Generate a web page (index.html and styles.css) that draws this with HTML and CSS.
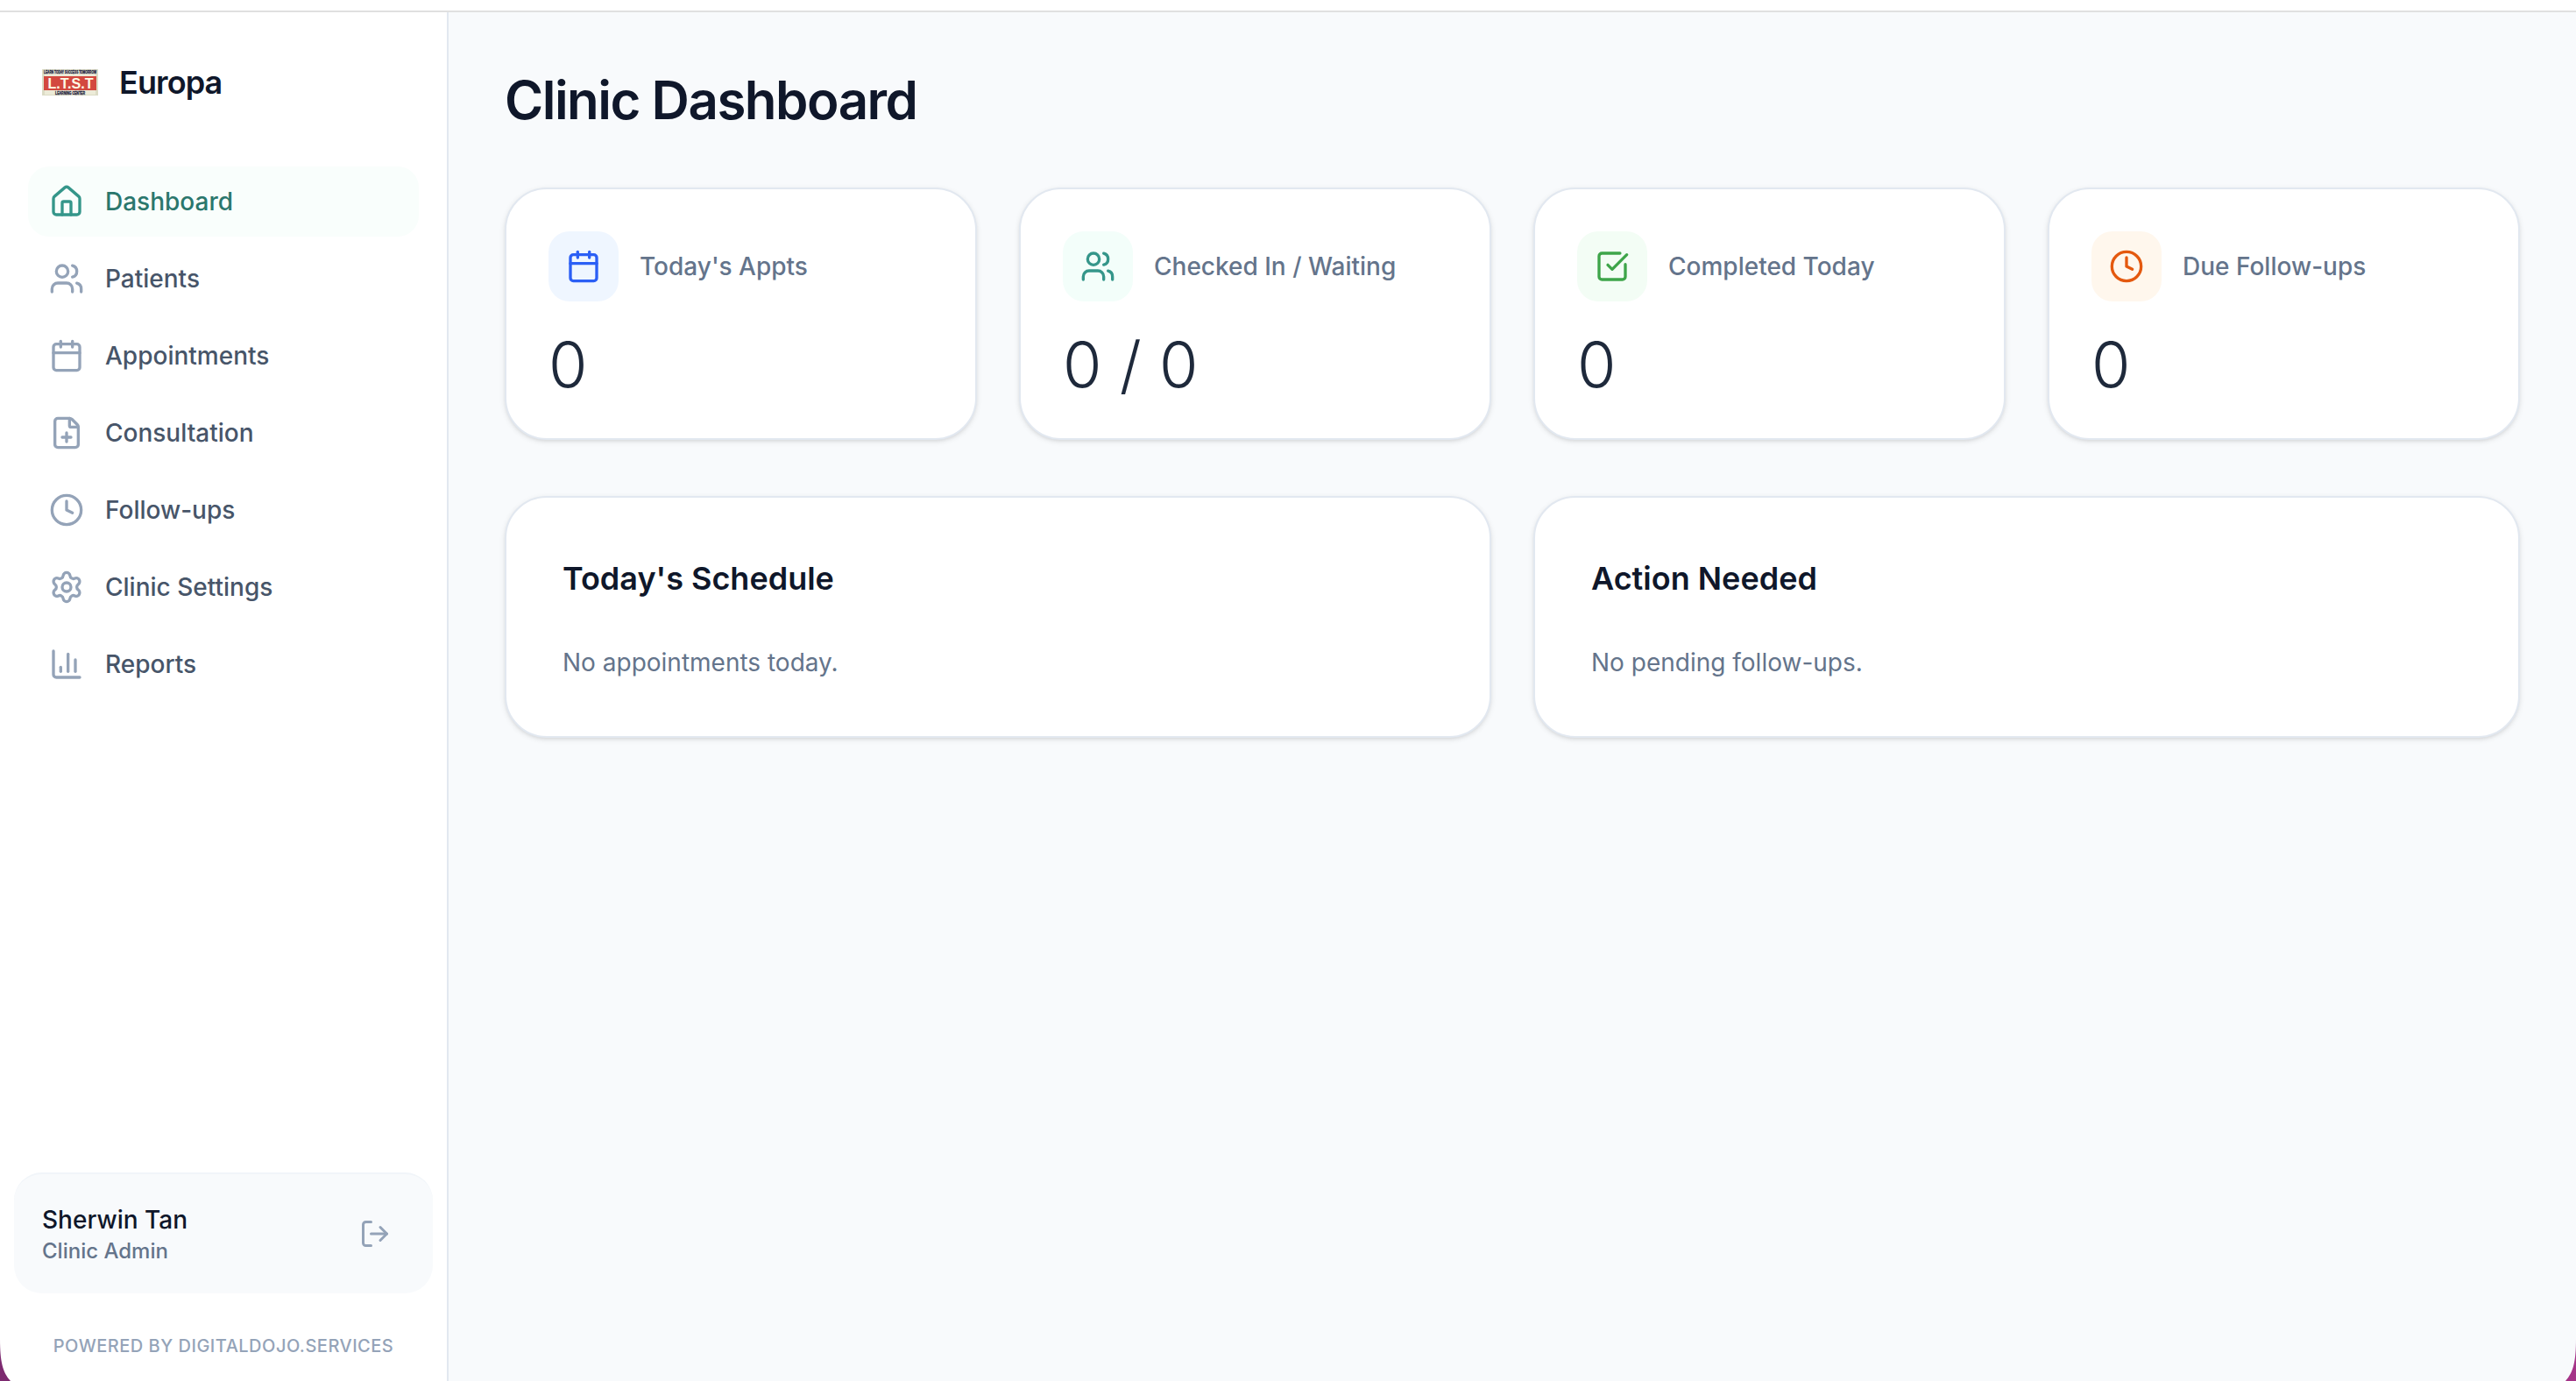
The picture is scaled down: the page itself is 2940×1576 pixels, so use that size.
FILE: index.html
```html
<!DOCTYPE html>
<html lang="en">
<head>
    <meta charset="UTF-8">
    <meta name="viewport" content="width=device-width, initial-scale=1.0">
    <title>Clinic Dashboard</title>
    <link rel="stylesheet" href="styles.css">
</head>
<body>
    <div class="top-strip"></div>
    <div class="app">
        <aside class="sidebar">
            <div class="brand">
                <svg class="brand-logo" viewBox="0 0 64 30">
                    <rect width="64" height="30" fill="#dcdcc6"/>
                    <rect x="3" y="1" width="58" height="28" fill="#ecebd8"/>
                    <rect x="2" y="8" width="60" height="16" fill="#d3483f"/>
                    <text class="logo-small" x="2" y="5.4" textLength="60" lengthAdjust="spacingAndGlyphs">LEARN TODAY SUCCESS TOMORROW</text>
                    <text class="logo-big" x="6.5" y="21.8" textLength="52" lengthAdjust="spacingAndGlyphs">L.T.S.T</text>
                    <text class="logo-small" x="15" y="28.6" textLength="34" lengthAdjust="spacingAndGlyphs">LEARNING CENTER</text>
                </svg>
                <span class="brand-name">Europa</span>
            </div>
            <nav class="nav">
                <a class="nav-item active">
                    <svg class="icon" viewBox="0 0 24 24"><path d="M15 21v-8a1 1 0 0 0-1-1h-4a1 1 0 0 0-1 1v8"/><path d="M3 10a2 2 0 0 1 .709-1.528l7-5.999a2 2 0 0 1 2.582 0l7 5.999A2 2 0 0 1 21 10v9a2 2 0 0 1-2 2H5a2 2 0 0 1-2-2z"/></svg>
                    Dashboard
                </a>
                <a class="nav-item">
                    <svg class="icon" viewBox="0 0 24 24"><path d="M16 21v-2a4 4 0 0 0-4-4H6a4 4 0 0 0-4 4v2"/><path d="M16 3.128a4 4 0 0 1 0 7.744"/><path d="M22 21v-2a4 4 0 0 0-3-3.87"/><circle cx="9" cy="7" r="4"/></svg>
                    Patients
                </a>
                <a class="nav-item">
                    <svg class="icon" viewBox="0 0 24 24"><path d="M8 2v4"/><path d="M16 2v4"/><rect width="18" height="18" x="3" y="4" rx="2"/><path d="M3 10h18"/></svg>
                    Appointments
                </a>
                <a class="nav-item">
                    <svg class="icon" viewBox="0 0 24 24"><path d="M6 22a2 2 0 0 1-2-2V4a2 2 0 0 1 2-2h8a2.4 2.4 0 0 1 1.704.706l3.588 3.588A2.4 2.4 0 0 1 20 8v12a2 2 0 0 1-2 2z"/><path d="M14 2v5a1 1 0 0 0 1 1h5"/><path d="M9 15h6"/><path d="M12 18v-6"/></svg>
                    Consultation
                </a>
                <a class="nav-item">
                    <svg class="icon" viewBox="0 0 24 24"><path d="M12 6v6l4 2"/><circle cx="12" cy="12" r="10"/></svg>
                    Follow-ups
                </a>
                <a class="nav-item">
                    <svg class="icon" viewBox="0 0 24 24"><path d="M9.671 4.136a2.34 2.34 0 0 1 4.659 0 2.34 2.34 0 0 0 3.319 1.915 2.34 2.34 0 0 1 2.33 4.033 2.34 2.34 0 0 0 0 3.831 2.34 2.34 0 0 1-2.33 4.033 2.34 2.34 0 0 0-3.319 1.915 2.34 2.34 0 0 1-4.659 0 2.34 2.34 0 0 0-3.32-1.915 2.34 2.34 0 0 1-2.33-4.033 2.34 2.34 0 0 0 0-3.831A2.34 2.34 0 0 1 6.35 6.051a2.34 2.34 0 0 0 3.319-1.915"/><circle cx="12" cy="12" r="3"/></svg>
                    Clinic Settings
                </a>
                <a class="nav-item">
                    <svg class="icon" viewBox="0 0 24 24"><path d="M3 3v16a2 2 0 0 0 2 2h16"/><path d="M18 17V9"/><path d="M13 17V5"/><path d="M8 17v-3"/></svg>
                    Reports
                </a>
            </nav>
            <div class="user">
                <div>
                    <div class="user-name">Sherwin Tan</div>
                    <div class="user-role">Clinic Admin</div>
                </div>
                <button class="logout" aria-label="Log out">
                    <svg class="icon icon-sm" viewBox="0 0 24 24"><path d="m16 17 5-5-5-5"/><path d="M21 12H9"/><path d="M9 21H5a2 2 0 0 1-2-2V5a2 2 0 0 1 2-2h4"/></svg>
                </button>
            </div>
            <p class="powered">Powered by digitaldojo.services</p>
        </aside>

        <main class="main">
            <h1>Clinic Dashboard</h1>
            <section class="stats">
                <div class="card stat">
                    <div class="stat-head">
                        <span class="stat-icon blue">
                            <svg class="icon" viewBox="0 0 24 24"><path d="M8 2v4"/><path d="M16 2v4"/><rect width="18" height="18" x="3" y="4" rx="2"/><path d="M3 10h18"/></svg>
                        </span>
                        <span>Today's Appts</span>
                    </div>
                    <div class="stat-value">0</div>
                </div>
                <div class="card stat">
                    <div class="stat-head">
                        <span class="stat-icon teal">
                            <svg class="icon" viewBox="0 0 24 24"><path d="M16 21v-2a4 4 0 0 0-4-4H6a4 4 0 0 0-4 4v2"/><path d="M16 3.128a4 4 0 0 1 0 7.744"/><path d="M22 21v-2a4 4 0 0 0-3-3.87"/><circle cx="9" cy="7" r="4"/></svg>
                        </span>
                        <span>Checked In / Waiting</span>
                    </div>
                    <div class="stat-value">0 / 0</div>
                </div>
                <div class="card stat">
                    <div class="stat-head">
                        <span class="stat-icon green">
                            <svg class="icon" viewBox="0 0 24 24"><path d="M21 10.656V19a2 2 0 0 1-2 2H5a2 2 0 0 1-2-2V5a2 2 0 0 1 2-2h12.344"/><path d="m9 11 3 3L22 4"/></svg>
                        </span>
                        <span>Completed Today</span>
                    </div>
                    <div class="stat-value">0</div>
                </div>
                <div class="card stat">
                    <div class="stat-head">
                        <span class="stat-icon orange">
                            <svg class="icon" viewBox="0 0 24 24"><path d="M12 6v6l4 2"/><circle cx="12" cy="12" r="10"/></svg>
                        </span>
                        <span>Due Follow-ups</span>
                    </div>
                    <div class="stat-value">0</div>
                </div>
            </section>
            <section class="panels">
                <div class="card panel">
                    <h2>Today's Schedule</h2>
                    <p>No appointments today.</p>
                </div>
                <div class="card panel">
                    <h2>Action Needed</h2>
                    <p>No pending follow-ups.</p>
                </div>
            </section>
        </main>
    </div>

    <!-- Rounded window corners -->
    <svg class="corner corner-left" viewBox="0 0 20 60"><path d="M0 12C0 38 3 50 12 60H0Z"/></svg>
    <svg class="corner corner-right" viewBox="0 0 20 60"><path d="M20 12C20 38 17 50 8 60H20Z"/></svg>
</body>
</html>
```

FILE: styles.css
```css
* {
    box-sizing: border-box;
}

body {
    display: flex;
    flex-direction: column;
    height: 100vh;
    margin: 0;
    background: #f8fafc;
    color: #0f172a;
    font-family: Inter, "Liberation Sans", sans-serif;
    font-size: 28px;
    line-height: 40px;
    overflow: hidden;
}

h1, h2, p {
    margin: 0;
}

.top-strip {
    flex: none;
    height: 14px;
    background: #fff;
    border-bottom: 2px solid #e0e0e0;
}

.app {
    display: flex;
    flex: 1;
    min-height: 0;
}

/* Sidebar */
.sidebar {
    display: flex;
    flex-direction: column;
    flex: none;
    width: 512px;
    background: #fff;
    border-right: 2px solid #e2e8f0;
}

.brand {
    display: flex;
    align-items: center;
    gap: 24px;
    height: 160px;
    padding: 0 48px;
}

.brand-logo {
    width: 64px;
    height: 30px;
    overflow: visible;
}

.logo-small {
    font-family: "Liberation Sans", sans-serif;
    font-size: 5px;
    font-weight: 700;
    fill: #20203c;
    stroke: #20203c;
    stroke-width: 0.3;
}

.logo-big {
    font-family: "Liberation Sans", sans-serif;
    font-size: 17px;
    font-weight: 700;
    fill: #fffbe6;
}

.brand-name {
    font-size: 36px;
    font-weight: 600;
    letter-spacing: -0.025em;
}

.nav {
    display: flex;
    flex-direction: column;
    flex: 1;
    gap: 8px;
    padding: 16px 32px;
}

.nav-item {
    display: flex;
    align-items: center;
    gap: 24px;
    height: 80px;
    padding: 0 24px;
    border-radius: 24px;
    color: #475569;
    font-weight: 500;
}

.nav-item .icon {
    color: #94a3b8;
}

.nav-item.active {
    background: #f9fefc;
    color: #2b776d;
}

.nav-item.active .icon {
    color: #35968a;
}

.icon {
    flex: none;
    width: 40px;
    height: 40px;
    fill: none;
    stroke: currentColor;
    stroke-width: 2;
    stroke-linecap: round;
    stroke-linejoin: round;
}

.icon-sm {
    display: block;
    width: 36px;
    height: 36px;
}

.user {
    display: flex;
    align-items: center;
    justify-content: space-between;
    margin: 0 16px;
    padding: 32px;
    background: #f8fafc;
    border-top: 2px solid #f1f5f9;
    border-radius: 32px;
}

.user-name {
    font-weight: 500;
}

.user-role {
    color: #64748b;
    font-size: 24px;
    font-weight: 500;
    line-height: 32px;
}

.logout {
    padding: 16px;
    background: none;
    border: none;
    color: #94a3b8;
}

.powered {
    padding: 45px 0 25px;
    color: #94a3b8;
    font-size: 20px;
    font-weight: 500;
    letter-spacing: 0.025em;
    line-height: 30px;
    text-align: center;
    text-transform: uppercase;
}

/* Main area */
.main {
    flex: 1;
    padding: 64px;
}

h1 {
    font-size: 60px;
    font-weight: 600;
    letter-spacing: -0.025em;
    line-height: 72px;
}

.stats, .panels {
    display: grid;
    gap: 48px;
    margin-top: 64px;
}

.stats {
    grid-template-columns: repeat(4, 1fr);
}

.panels {
    grid-template-columns: repeat(2, 1fr);
}

.card {
    background: #fff;
    border: 2px solid #e2e8f0;
    border-radius: 48px;
    box-shadow: 0 2px 6px rgba(0,0,0,0.1), 0 2px 4px -2px rgba(0,0,0,0.1);
}

.stat {
    padding: 48px;
}

.stat-head {
    display: flex;
    align-items: center;
    gap: 24px;
    color: #64748b;
    font-weight: 500;
}

.stat-icon {
    display: flex;
    padding: 20px;
    border-radius: 24px;
}

.blue {
    background: #eff6ff;
    color: #2b5ff5;
}

.teal {
    background: #f3fefa;
    color: #35968a;
}

.green {
    background: #f3fdf5;
    color: #3ea54a;
}

.orange {
    background: #fff7ed;
    color: #e4590f;
}

.stat-value {
    margin-top: 36px;
    color: #1e293b;
    font-size: 72px;
    font-weight: 300;
    line-height: 72px;
}

.panel {
    padding: 64px;
}

h2 {
    font-size: 36px;
    font-weight: 600;
    line-height: 56px;
}

.panel p {
    margin-top: 48px;
    color: #64748b;
}

.corner {
    position: absolute;
    bottom: 0;
    width: 20px;
    height: 60px;
}

.corner-left {
    left: 0;
    fill: #7d2a70;
}

.corner-right {
    right: 0;
    fill: #a53488;
}
```
